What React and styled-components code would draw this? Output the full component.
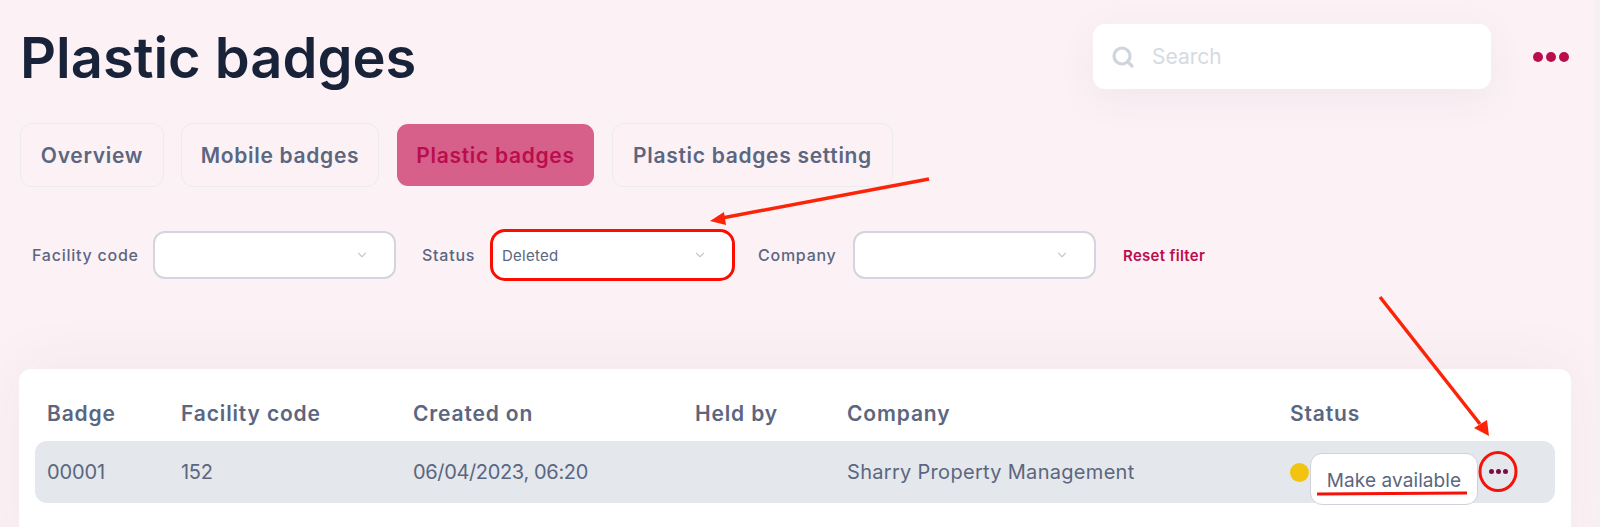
import React from "react";
import styled, { createGlobalStyle } from "styled-components";
import { ChevronDown, Search } from "lucide-react";

const GlobalStyle = createGlobalStyle`
    html, body {
        margin: 0;
        height: 527px;
        overflow: hidden;
        background: #fcf2f6;
        font-family: "Inter", "Noto Sans", sans-serif;
    }
    * {
        box-sizing: border-box;
    }
`

const Page = styled.div`
    position: relative;
    width: 1600px;
    height: 527px;
    padding: 0 0 0 20px;
    overflow: hidden;
    background: #fcf2f6;
    border-right: 6px solid #f6f0f3;
`

const Header = styled.header`
    display: flex;
    justify-content: space-between;
    align-items: flex-start;
    height: 123px;
    padding: 24px 25px 0 0;
`

const Title = styled.h1`
    margin: 0;
    padding-top: 2px;
    font-size: 56px;
    line-height: 64px;
    font-weight: 600;
    letter-spacing: 0;
    color: #18233a;
`

const HeaderRight = styled.div`
    display: flex;
    align-items: center;
    gap: 42px;
`

const SearchBox = styled.div`
    display: flex;
    align-items: center;
    gap: 17px;
    width: 398px;
    height: 65px;
    padding-left: 18px;
    background: #fff;
    border-radius: 12px;
    box-shadow: 0 10px 40px rgba(60, 50, 60, 0.06);
    color: #d0d5dc;
`

const SearchText = styled.span`
    font-size: 21px;
    color: #d6dae1;
`

const Dots = styled.div`
    display: flex;
    gap: ${(p) => p.$gap}px;
`

const Dot = styled.span`
    width: ${(p) => p.$size}px;
    height: ${(p) => p.$size}px;
    border-radius: 50%;
    background: ${(p) => p.$color};
`

const Tabs = styled.nav`
    display: flex;
    gap: 17px;
    height: 64px;
`

const Tab = styled.div`
    display: flex;
    align-items: center;
    justify-content: center;
    width: ${(p) => p.$width}px;
    border-radius: 12px;
    border: 1px solid ${(p) => (p.$active ? "transparent" : "#e9ecf1")};
    background: ${(p) => (p.$active ? "#d6608a" : "transparent")};
    background-clip: padding-box;
    color: ${(p) => (p.$active ? "#bb0d4c" : "#5b6680")};
    font-size: 21px;
    font-weight: 600;
    letter-spacing: 0.7px;
`

const Filters = styled.div`
    display: flex;
    align-items: center;
    height: 48px;
    margin-top: 44px;
    padding-left: 12px;
`

const FilterLabel = styled.label`
    flex: none;
    width: ${(p) => p.$width}px;
    font-size: 16px;
    font-weight: 500;
    letter-spacing: 0.75px;
    color: #5b6680;
`

const Select = styled.div`
    display: flex;
    align-items: center;
    justify-content: space-between;
    flex: none;
    width: ${(p) => p.$width}px;
    height: ${(p) => (p.$marked ? 52 : 48)}px;
    margin-right: ${(p) => p.$gap}px;
    padding: 0 25px 0 ${(p) => (p.$marked ? 9 : 12)}px;
    background: #fff;
    border: ${(p) => (p.$marked ? "3px solid #fb0d00" : "2px solid #d2d5dc")};
    border-radius: ${(p) => (p.$marked ? 15 : 12)}px;
    color: #5b6680;
    font-size: 15px;
    letter-spacing: 0.25px;
`

const ResetLink = styled.a`
    margin-left: 3px;
    font-size: 15px;
    font-weight: 600;
    letter-spacing: 0.3px;
    color: #bb0d4c;
`

const Card = styled.section`
    width: 1552px;
    height: 200px;
    margin-top: 90px;
    margin-left: -1px;
    padding: 0 16px;
    background: #fff;
    border-radius: 12px;
    box-shadow: 0 -6px 60px rgba(60, 50, 60, 0.05);
`

const Columns = styled.div`
    position: relative;
    display: grid;
    grid-template-columns: 134px 232px 282px 152px 443px 1fr;
    align-items: center;
    padding-left: 12px;
`

const HeadRow = styled(Columns)`
    height: 72px;
    padding-top: 16px;
    font-size: 21px;
    font-weight: 600;
    letter-spacing: 0.85px;
    color: #5b6680;
`

const BodyRow = styled(Columns)`
    height: 62px;
    background: #e4e7eb;
    border-radius: 12px;
    font-size: 20px;
    letter-spacing: 0.3px;
    color: #5b6680;
`

const NumberCell = styled.span`
    letter-spacing: ${(p) => p.$spacing}px;
`

const StatusCell = styled.div`
    display: flex;
    align-items: center;
`

const Popover = styled.div`
    position: absolute;
    left: 1275px;
    top: 12px;
    display: flex;
    align-items: center;
    justify-content: center;
    width: 168px;
    height: 52px;
    padding-top: 3px;
    background: #fff;
    border: 1.5px solid #ced2d9;
    border-radius: 12px;
    font-size: 19px;
    letter-spacing: 0.1px;
    color: #5b6680;
`

const MoreButton = styled.div`
    position: absolute;
    left: 1454px;
    top: 28px;
`

const Annotations = styled.svg`
    position: absolute;
    left: 0;
    top: 0;
    pointer-events: none;
`

const tabs = [
    { label: "Overview", width: 144 },
    { label: "Mobile badges", width: 198 },
    { label: "Plastic badges", width: 199, active: true },
    { label: "Plastic badges setting", width: 281 },
];

const ThreeDots = ({ size, gap, color }) => (
    <Dots $gap={gap}>
        <Dot $size={size} $color={color} />
        <Dot $size={size} $color={color} />
        <Dot $size={size} $color={color} />
    </Dots>
);

const App = () => {
    return (
        <Page>
            <GlobalStyle />
            <Header>
                <Title>Plastic badges</Title>
                <HeaderRight>
                    <SearchBox>
                        <Search size={24} strokeWidth={3.2} />
                        <SearchText>Search</SearchText>
                    </SearchBox>
                    <ThreeDots size={10} gap={3} color="#bb0d4c" />
                </HeaderRight>
            </Header>

            <Tabs>
                {tabs.map((tab) => (
                    <Tab key={tab.label} $width={tab.width} $active={tab.active}>
                        {tab.label}
                    </Tab>
                ))}
            </Tabs>

            <Filters>
                <FilterLabel $width={121}>Facility code</FilterLabel>
                <Select $width={243} $gap={26}>
                    <span />
                    <ChevronDown size={14} color="#c3c8d1" />
                </Select>
                <FilterLabel $width={68}>Status</FilterLabel>
                <Select $width={245} $gap={23} $marked>
                    <span>Deleted</span>
                    <ChevronDown size={14} color="#c3c8d1" />
                </Select>
                <FilterLabel $width={95}>Company</FilterLabel>
                <Select $width={243} $gap={24}>
                    <span />
                    <ChevronDown size={14} color="#c3c8d1" />
                </Select>
                <ResetLink>Reset filter</ResetLink>
            </Filters>

            <Card>
                <HeadRow>
                    <span>Badge</span>
                    <span>Facility code</span>
                    <span>Created on</span>
                    <span>Held by</span>
                    <span>Company</span>
                    <span>Status</span>
                </HeadRow>
                <BodyRow>
                    <NumberCell $spacing={-0.1}>00001</NumberCell>
                    <NumberCell $spacing={-0.3}>152</NumberCell>
                    <NumberCell $spacing={-0.35}>06/04/2023, 06:20</NumberCell>
                    <span />
                    <span>Sharry Property Management</span>
                    <StatusCell>
                        <Dot $size={19} $color="#f2c40f" />
                    </StatusCell>
                    <Popover>Make available</Popover>
                    <MoreButton>
                        <ThreeDots size={5} gap={2} color="#7d0c42" />
                    </MoreButton>
                </BodyRow>
            </Card>

            <Annotations width="1600" height="527" viewBox="0 0 1600 527">
                <line x1="929" y1="179" x2="722" y2="218" stroke="#fb2408" strokeWidth="3.5" />
                <polygon points="710,221 724,212 726,225" fill="#fb2408" />
                <line x1="1380" y1="297" x2="1480" y2="424" stroke="#fb2408" strokeWidth="3.5" />
                <polygon points="1489,436 1487,420 1474,428" fill="#fb2408" />
                <line x1="1317" y1="494" x2="1467" y2="493" stroke="#f5120a" strokeWidth="3" />
                <ellipse cx="1498" cy="471.5" rx="18" ry="19" fill="none" stroke="#f5120a" strokeWidth="3" />
            </Annotations>
        </Page>
    );
}

export default App;
